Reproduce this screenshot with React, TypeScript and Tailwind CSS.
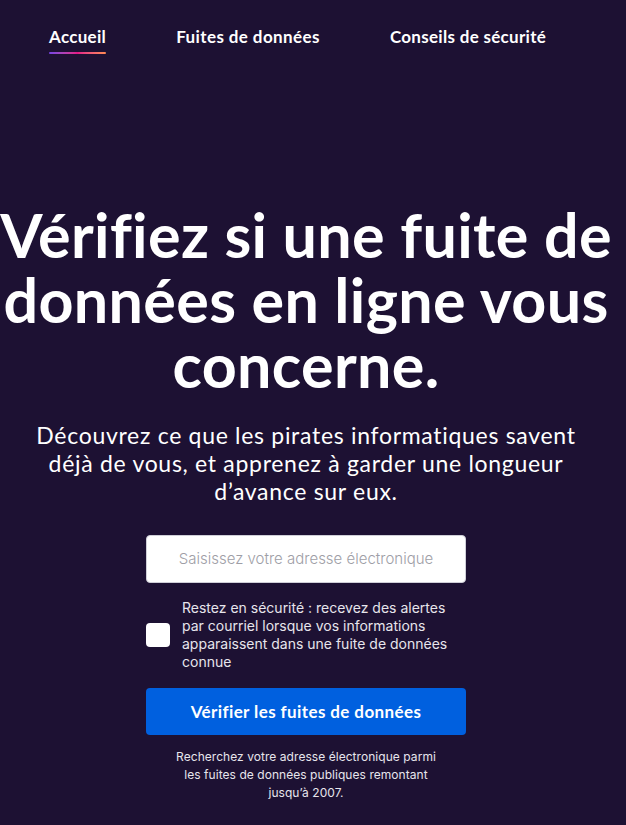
import React from "react";

export default function App() {
  return (
    <div className="min-h-[825px] w-full bg-[#1d1133] text-white" style={{ fontFamily: "Lato, 'Open Sans', sans-serif" }}>
      <nav className="flex h-[76px] items-start pt-[25px]">
        <div className="ml-[49px] flex flex-col">
          <span className="text-[17px] font-bold leading-[24px] tracking-[0.3px] text-white">Accueil</span>
          <span className="mt-[3px] h-[2px] w-[57px] rounded-full bg-gradient-to-r from-[#7542e5] via-[#e31587] to-[#ff8a50]" />
        </div>
        <span className="ml-[70px] text-[17px] font-bold leading-[24px] tracking-[0.4px] text-white">Fuites de données</span>
        <span className="ml-[70px] text-[17px] font-bold leading-[24px] tracking-[0.3px] text-white">Conseils de sécurité</span>
      </nav>
      <div className="flex w-[612px] flex-col items-center">
        <h1 className="mt-[126px] w-full whitespace-nowrap text-center text-[61px] font-bold leading-[65px] tracking-[0.35px]">
          Vérifiez si une fuite de
          <br />
          données en ligne vous
          <br />
          concerne.
        </h1>
        <p className="mt-[24px] w-[560px] text-center text-[23px] leading-[28px] tracking-[0.7px] text-white">
          Découvrez ce que les pirates informatiques savent déjà de vous, et apprenez à garder une longueur d’avance sur eux.
        </p>
        <div className="mt-[30px] flex w-[320px] flex-col" style={{ fontFamily: "Inter, sans-serif" }}>
          <div className="flex h-[48px] items-center justify-center rounded-[4px] border border-[#cfcfd8] bg-white text-[15px] font-light text-[#9e9ea6]">
            Saisissez votre adresse électronique
          </div>
          <label className="mt-[16px] flex items-center gap-[12px]">
            <span className="h-[24px] w-[24px] shrink-0 rounded-[4px] bg-white" />
            <span className="text-[14px] leading-[18px] text-[#e7e5ec]">
              Restez en sécurité : recevez des alertes par courriel lorsque vos informations apparaissent dans une fuite de données connue
            </span>
          </label>
          <button
            className="mt-[17px] flex h-[47px] items-center justify-center rounded-[4px] bg-[#0060df] text-[17px] font-bold tracking-[0.4px] text-white"
            style={{ fontFamily: "Lato, sans-serif" }}
          >
            Vérifier les fuites de données
          </button>
          <p className="mx-auto mt-[13px] w-[264px] text-center text-[12px] leading-[18px] tracking-[0.05px] text-[#e7e5ec]">
            Recherchez votre adresse électronique parmi les fuites de données publiques remontant jusqu’à 2007.
          </p>
        </div>
      </div>
    </div>
  );
}
